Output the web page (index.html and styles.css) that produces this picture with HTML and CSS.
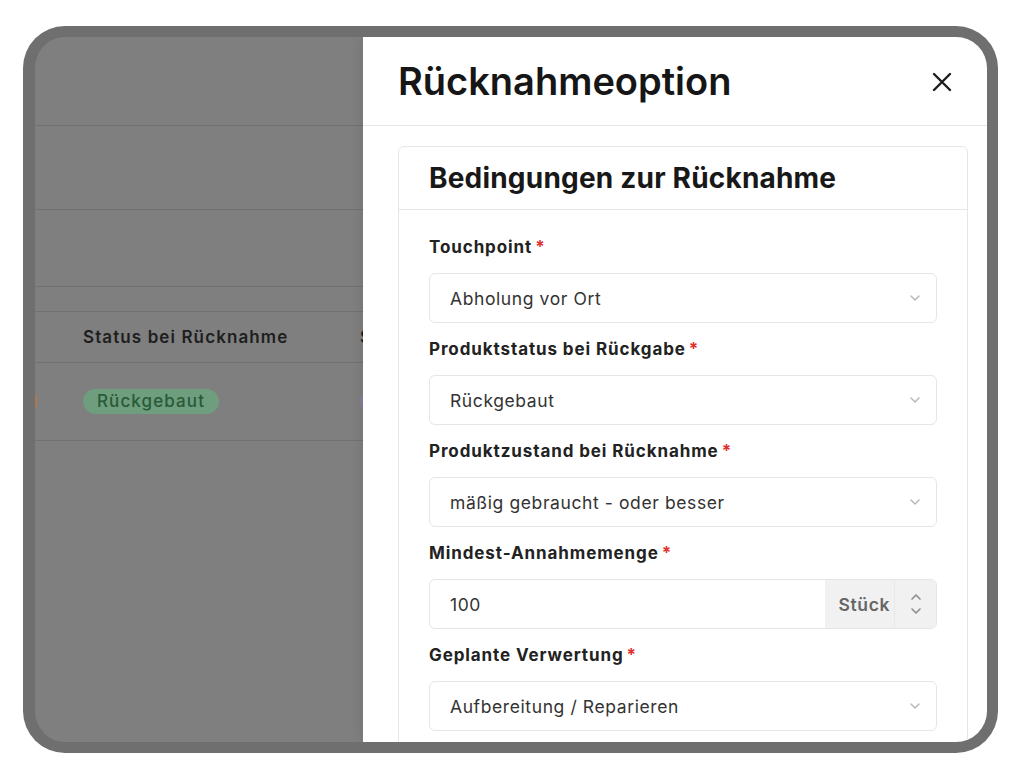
FILE: index.html
```html
<!DOCTYPE html>
<html lang="de">
<head>
    <meta charset="UTF-8">
    <meta name="viewport" content="width=device-width, initial-scale=1.0">
    <title>Rücknahmeoption</title>
    <link rel="stylesheet" href="styles.css">
</head>
<body>
    <div class="frame">
        <!-- the page behind the drawer, dimmed -->
        <div class="page">
            <div class="page-row page-top"></div>
            <div class="page-row page-tabs"></div>
            <div class="page-row page-tools"></div>
            <div class="page-row page-gap"></div>
            <div class="page-row table-head">
                <div class="col col-a"></div>
                <div class="col col-b">Status bei Rücknahme</div>
                <div class="col col-c">Standort</div>
            </div>
            <div class="page-row table-row">
                <div class="col col-a"><span class="pill pill-orange"></span></div>
                <div class="col col-b"><span class="pill pill-green">Rückgebaut</span></div>
                <div class="col col-c"><span class="pill pill-purple">Lager</span></div>
            </div>
        </div>

        <aside class="drawer">
            <header class="drawer-head">
                <h1>Rücknahmeoption</h1>
                <button class="close" title="Schließen">
                    <svg width="20" height="20" viewBox="0 0 20 20"><path d="M2 2L18 18M18 2L2 18" stroke="#1c1c1c" stroke-width="2.4" stroke-linecap="round"/></svg>
                </button>
            </header>

            <div class="drawer-body">
                <section class="card">
                    <h2 class="card-title">Bedingungen zur Rücknahme</h2>
                    <div class="card-body">
                        <div class="field">
                            <label>Touchpoint<span class="req">*</span></label>
                            <div class="select">
                                <span>Abholung vor Ort</span>
                                <svg class="chev" width="10" height="6" viewBox="0 0 10 6"><path d="M1 1L5 5L9 1" fill="none" stroke="#b8b8b8" stroke-width="1.5" stroke-linecap="round" stroke-linejoin="round"/></svg>
                            </div>
                        </div>
                        <div class="field">
                            <label>Produktstatus bei Rückgabe<span class="req">*</span></label>
                            <div class="select">
                                <span>Rückgebaut</span>
                                <svg class="chev" width="10" height="6" viewBox="0 0 10 6"><path d="M1 1L5 5L9 1" fill="none" stroke="#b8b8b8" stroke-width="1.5" stroke-linecap="round" stroke-linejoin="round"/></svg>
                            </div>
                        </div>
                        <div class="field">
                            <label>Produktzustand bei Rücknahme<span class="req">*</span></label>
                            <div class="select">
                                <span>mäßig gebraucht - oder besser</span>
                                <svg class="chev" width="10" height="6" viewBox="0 0 10 6"><path d="M1 1L5 5L9 1" fill="none" stroke="#b8b8b8" stroke-width="1.5" stroke-linecap="round" stroke-linejoin="round"/></svg>
                            </div>
                        </div>
                        <div class="field">
                            <label>Mindest-Annahmemenge<span class="req">*</span></label>
                            <div class="input-group">
                                <span class="value">100</span>
                                <span class="addon">Stück</span>
                                <span class="spin">
                                    <svg width="12" height="24" viewBox="0 0 12 24"><path d="M2 7L6 3L10 7M2 17L6 21L10 17" fill="none" stroke="#8c8c8c" stroke-width="1.6" stroke-linecap="round" stroke-linejoin="round"/></svg>
                                </span>
                            </div>
                        </div>
                        <div class="field">
                            <label>Geplante Verwertung<span class="req">*</span></label>
                            <div class="select">
                                <span>Aufbereitung / Reparieren</span>
                                <svg class="chev" width="10" height="6" viewBox="0 0 10 6"><path d="M1 1L5 5L9 1" fill="none" stroke="#b8b8b8" stroke-width="1.5" stroke-linecap="round" stroke-linejoin="round"/></svg>
                            </div>
                        </div>
                    </div>
                </section>
            </div>
        </aside>
    </div>
</body>
</html>
```

FILE: styles.css
```css
:root {
    --frame: #6f6f6f;
    --dim: #7f7f7f;
    --dim-line: #717171;
    --border: #e6e6e6;
    --text: #1c1c1c;
    --req: #e0312f;
}

* {
    margin: 0;
    padding: 0;
    box-sizing: border-box;
    font-family: Inter, 'Noto Sans', sans-serif;
}

body {
    background: white;
    color: var(--text);
}

.frame {
    position: relative;
    width: 975px;
    height: 727px;
    margin: 26px 0 0 23px;
    border: solid var(--frame);
    border-width: 11px 11px 11px 12px;
    border-radius: 42px;
    overflow: hidden;
    background: var(--dim);
}

/* dimmed page */
.page-row {
    border-bottom: 1px solid var(--dim-line);
}

.page-top { height: 89px; }
.page-tabs { height: 84px; }
.page-tools { height: 77px; }
.page-gap { height: 25px; }

.table-head,
.table-row {
    display: flex;
    align-items: center;
    margin-left: -150px;
}

.table-head { height: 51px; }
.table-row { height: 78px; }

.col {
    padding-left: 25px;
    white-space: nowrap;
    font-size: 17px;
    font-weight: 600;
    letter-spacing: 1.1px;
    color: #1e1e1e;
}

.col-a { width: 173px; }
.col-b { width: 277px; }

.pill {
    display: inline-block;
    padding: 2px 14px;
    border-radius: 13px;
    font-size: 17px;
    font-weight: 500;
    line-height: 21px;
    vertical-align: middle;
}

.pill-orange { width: 128px; height: 25px; background: #a27a5c; }
.pill-green { background: #6e9e7e; color: #285a38; }
.pill-purple { background: #8a7c9e; color: #46345e; }

/* drawer */
.drawer {
    position: absolute;
    top: 0;
    right: 0;
    bottom: 0;
    width: 624px;
    background: white;
    box-shadow: -3px 0 10px rgba(0, 0, 0, 0.08);
}

.drawer-head {
    height: 89px;
    display: flex;
    align-items: center;
    justify-content: space-between;
    padding: 0 35px;
    border-bottom: 1px solid var(--border);
}

.drawer-head h1 {
    font-size: 38px;
    font-weight: 600;
    color: #161616;
}

.close {
    display: flex;
    background: none;
    border: none;
    cursor: pointer;
    margin-top: 2px;
}

.drawer-body {
    padding: 20px 19px 0 35px;
}

.card {
    border: 1px solid var(--border);
    border-radius: 6px;
}

.card-title {
    height: 63px;
    display: flex;
    align-items: center;
    padding: 0 30px;
    border-bottom: 1px solid var(--border);
    font-size: 28px;
    font-weight: 700;
    letter-spacing: 0.2px;
    color: #181818;
}

.card-body {
    padding: 27px 30px 0;
}

.field {
    margin-bottom: 16px;
}

.field label {
    display: block;
    font-size: 17px;
    font-weight: 700;
    letter-spacing: 0.9px;
    line-height: 20px;
    margin-bottom: 16px;
    color: #222;
}

.req {
    color: var(--req);
    margin-left: 3px;
}

.select,
.input-group {
    height: 50px;
    display: flex;
    align-items: center;
    border: 1px solid var(--border);
    border-radius: 6px;
    font-size: 17.5px;
    letter-spacing: 0.6px;
    color: #333;
}

.select {
    justify-content: space-between;
    padding: 0 16px 0 20px;
}

.input-group {
    overflow: hidden;
}

.input-group .value {
    flex: 1;
    padding-left: 20px;
}

.addon,
.spin {
    height: 100%;
    display: flex;
    align-items: center;
    background: #f1f1f1;
}

.addon {
    padding: 0 4px 0 14px;
    font-weight: 600;
    color: #666;
    border-right: 1px solid #e8e8e8;
}

.spin {
    width: 41px;
    justify-content: center;
}
```
